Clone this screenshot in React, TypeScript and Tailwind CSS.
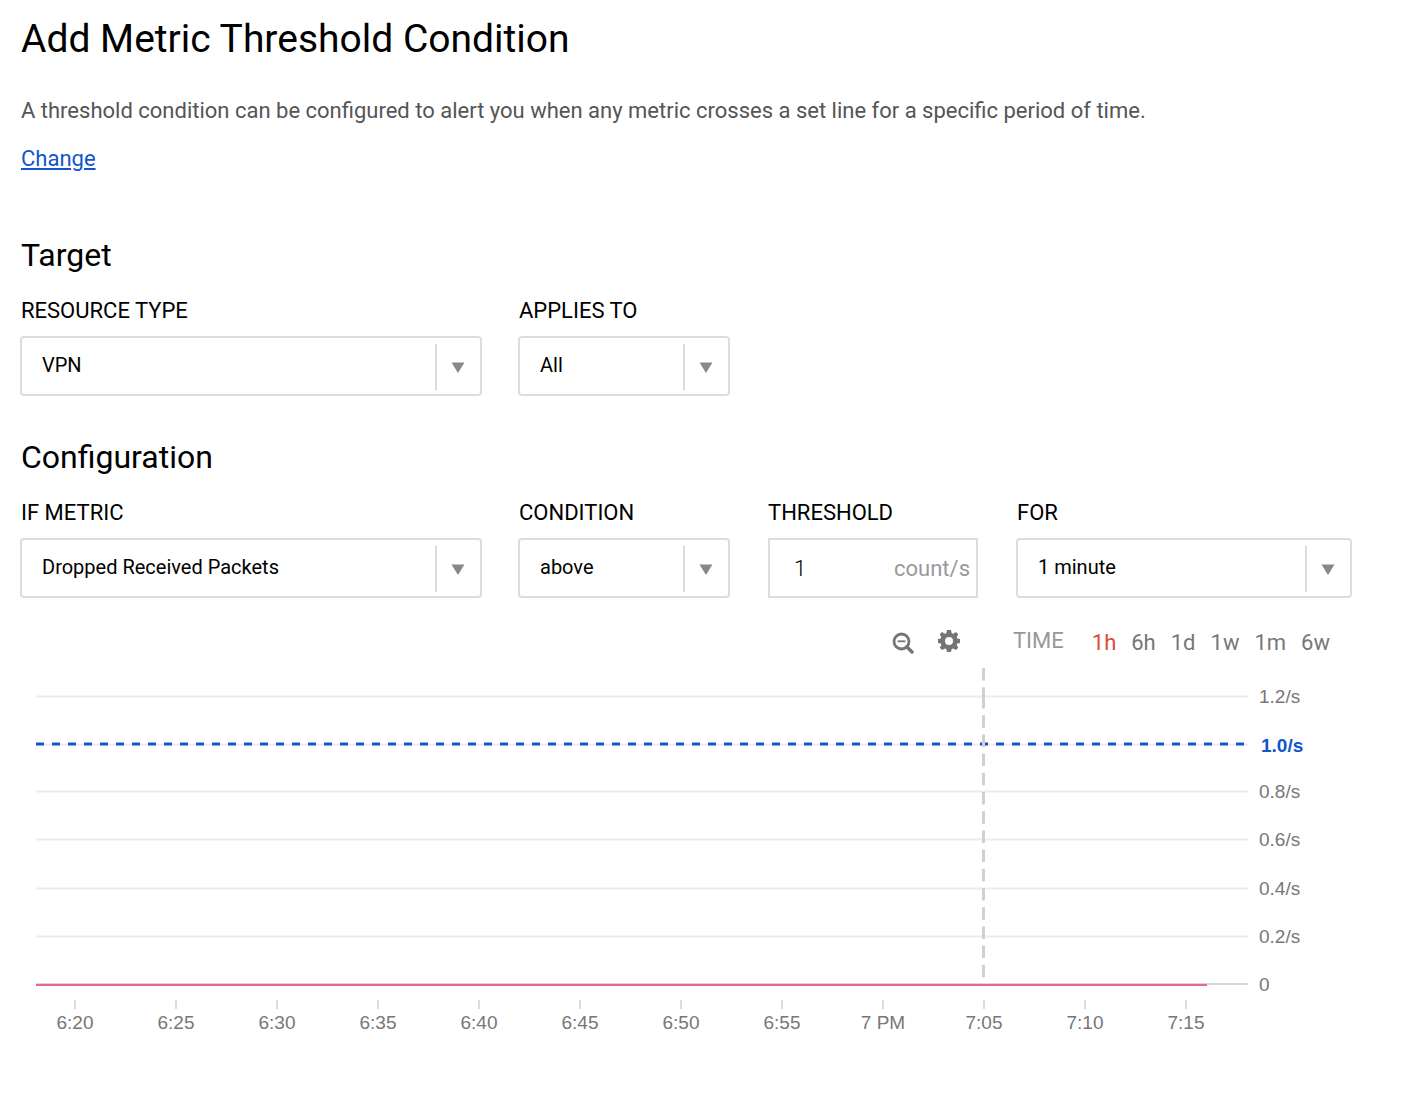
import { useId, useState } from 'react';

type SelectFieldProps = {
  label: string;
  options: string[];
};

const labelClass = 'block pl-px text-[22px] leading-7 text-black';

function SelectField({ label, options }: SelectFieldProps) {
  const id = useId();
  return (
    <div className="min-w-0">
      <label htmlFor={id} className={labelClass}>
        {label}
      </label>
      <div className="relative mt-[11px]">
        <select
          id={id}
          className="block h-[60px] w-full appearance-none rounded border-2 border-[#dcdcdc] bg-white pr-14 pb-0.5 pl-5 text-xl text-black"
        >
          {options.map((option) => (
            <option key={option}>{option}</option>
          ))}
        </select>
        <span className="pointer-events-none absolute top-2 right-0 bottom-1.5 flex w-[47px] items-center justify-center border-l-2 border-[#dcdcdc]">
          <svg width="14" height="11" viewBox="0 0 14 11" className="mr-1" aria-hidden="true">
            <path d="M0.5 0.5h13L7 11z" fill="#888" />
          </svg>
        </span>
      </div>
    </div>
  );
}

function ThresholdField() {
  return (
    <div className="min-w-0 px-0.5">
      <label htmlFor="threshold" className="block text-[22px] leading-7 text-black">
        THRESHOLD
      </label>
      <div className="mt-[11px] flex h-[60px] items-center border-2 border-[#dcdcdc] pr-1.5 pl-6">
        <input
          id="threshold"
          type="text"
          defaultValue="1"
          className="w-0 min-w-0 flex-1 bg-transparent text-[22px] font-light text-black outline-none"
        />
        <span className="text-[22px] text-[#999]">count/s</span>
      </div>
    </div>
  );
}

function ChartToolbar() {
  const ranges = ['1h', '6h', '1d', '1w', '1m', '6w'];
  const [active, setActive] = useState('1h');
  return (
    <div className="mt-7 flex h-8 items-center justify-end pr-[52px] text-[22px] text-[#777]">
      <button type="button" aria-label="Zoom out" className="mr-6 pt-0.5">
        <svg width="22" height="22" viewBox="0 0 22 22" fill="none" stroke="#757575" aria-hidden="true">
          <circle cx="9.5" cy="9.5" r="7.5" strokeWidth="2.8" />
          <path d="M14.8 14.8l5.2 5.2" strokeWidth="3.4" strokeLinecap="round" />
          <path d="M5.6 9.3h7.8" strokeWidth="1.8" />
        </svg>
      </button>
      <button type="button" aria-label="Chart settings" className="mr-[53px] pb-0.5">
        <svg width="22" height="22" viewBox="-11 -11 22 22" fill="#757575" aria-hidden="true">
          <path
            fillRule="evenodd"
            d="M-2-11h4l.7 3.2 1.5.6L7-9 9.2-6.8 7.8-4l.5 1.4L11-2v4l-2.8.6L7.7 4 9.2 6.8 7 9 4 7.6l-1.4.6L2 11h-4l-.6-2.8L-4 7.6-7 9-9.2 6.8-7.7 4l-.5-1.4L-11 2v-4l2.7-.6L-7.8-4-9.2-6.8-7-9l2.8 1.8 1.5-.6zM0-4a4 4 0 1 0 0 8 4 4 0 0 0 0-8z"
          />
        </svg>
      </button>
      <span className="mr-7 pb-1 text-[#999]">TIME</span>
      <div className="flex gap-[15px]">
        {ranges.map((range) => (
          <button
            key={range}
            type="button"
            onClick={() => setActive(range)}
            className={range === active ? 'text-[#dd4b39]' : 'text-[#777]'}
          >
            {range}
          </button>
        ))}
      </div>
    </div>
  );
}

const gridLines = [
  { y: 28, label: '1.2/s' },
  { y: 76, label: '' },
  { y: 123, label: '0.8/s' },
  { y: 171, label: '0.6/s' },
  { y: 220, label: '0.4/s' },
  { y: 268, label: '0.2/s' },
];

const ticks = ['6:20', '6:25', '6:30', '6:35', '6:40', '6:45', '6:50', '6:55', '7 PM', '7:05', '7:10', '7:15'];

function MetricChart() {
  return (
    <svg
      viewBox="0 0 1362 370"
      className="mt-2.5 block h-auto w-full font-['Liberation_Sans',Arial,sans-serif] text-[19px]"
      role="img"
      aria-label="Dropped received packets per second"
    >
      {gridLines.map(({ y, label }) => (
        <g key={y}>
          <path d={`M16 ${y + 0.5}H1228`} stroke="#ececec" strokeWidth="2" />
          <text x="1239" y={y + 7} fill="#777">
            {label}
          </text>
        </g>
      ))}
      <path d="M16 316H1228" stroke="#d8d8d8" strokeWidth="2" />
      <text x="1239" y="323" fill="#777">
        0
      </text>
      <path d="M16 76H1225" stroke="#1155cc" strokeWidth="3" strokeDasharray="8 8" />
      <text x="1241" y="84" fill="#1155cc" fontWeight="bold">
        1.0/s
      </text>
      <path d="M963.5 0V32" stroke="#d0d0d0" strokeWidth="3" strokeDasharray="12.5 6.7" />
      <path d="M963.5 28V310" stroke="#d0d0d0" strokeWidth="3" strokeDasharray="12.5 6.7" />
      <path d="M16 317H1187" stroke="#ec6292" strokeWidth="2" />
      {ticks.map((tick, i) => {
        const x = 55 + i * 101;
        return (
          <g key={tick}>
            <path d={`M${x} 332V341`} stroke="#dcdcdc" strokeWidth="2" />
            <text x={x} y="361" fill="#777" textAnchor="middle">
              {tick}
            </text>
          </g>
        );
      })}
    </svg>
  );
}

export default function App() {
  return (
    <main className="min-h-screen bg-white px-5 pt-[15px] pb-10 font-['Roboto',sans-serif] text-black">
      <h1 className="pl-px text-[39px] leading-[48px]">Add Metric Threshold Condition</h1>
      <p className="mt-8 pl-px text-[22px] leading-8 text-[#555]">
        A threshold condition can be configured to alert you when any metric crosses a set line for a specific period of
        time.
      </p>
      <a
        href="#change"
        className="mt-4 ml-px inline-block text-[22px] leading-8 text-[#1155cc] underline decoration-2 underline-offset-2"
      >
        Change
      </a>

      <section className="mt-[60px]">
        <h2 className="pl-px text-[32px] leading-10">Target</h2>
        <div className="mt-[22px] grid grid-cols-[462fr_212fr_214fr_336fr] gap-x-9 pr-[30px]">
          <SelectField label="RESOURCE TYPE" options={['VPN']} />
          <SelectField label="APPLIES TO" options={['All']} />
        </div>
      </section>

      <section className="mt-[41px]">
        <h2 className="pl-px text-[32px] leading-10">Configuration</h2>
        <div className="mt-[22px] grid grid-cols-[462fr_212fr_214fr_336fr] gap-x-9 pr-[30px]">
          <SelectField label="IF METRIC" options={['Dropped Received Packets']} />
          <SelectField label="CONDITION" options={['above', 'below']} />
          <ThresholdField />
          <SelectField label="FOR" options={['1 minute']} />
        </div>
        <ChartToolbar />
        <MetricChart />
      </section>
    </main>
  );
}
